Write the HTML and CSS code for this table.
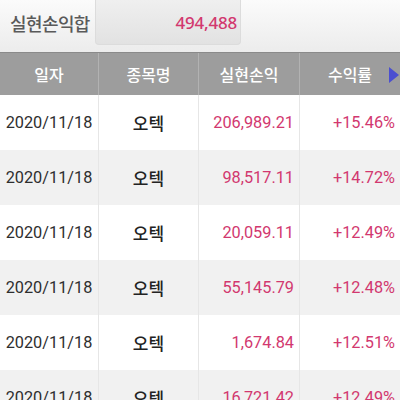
FILE: index.html
```html
<!DOCTYPE html>
<html lang="ko">
<head>
<meta charset="utf-8">
<link rel="stylesheet" href="styles.css">
</head>
<body>
<div class="summary">
  <div class="summary-label">실현손익합</div>
  <div class="summary-box"><span class="summary-value">494,488</span></div>
</div>
<div class="table">
  <div class="head">
    <div class="hcell">일자</div>
    <div class="hcell">종목명</div>
    <div class="hcell">실현손익</div>
    <div class="hcell last">수익률<span class="arrow"></span></div>
  </div>
  <div class="row">
    <div class="cell date">2020/11/18</div><div class="cell name">오텍</div><div class="cell num">206,989.21</div><div class="cell num">+15.46%</div>
  </div>
  <div class="row alt">
    <div class="cell date">2020/11/18</div><div class="cell name">오텍</div><div class="cell num">98,517.11</div><div class="cell num">+14.72%</div>
  </div>
  <div class="row">
    <div class="cell date">2020/11/18</div><div class="cell name">오텍</div><div class="cell num">20,059.11</div><div class="cell num">+12.49%</div>
  </div>
  <div class="row alt">
    <div class="cell date">2020/11/18</div><div class="cell name">오텍</div><div class="cell num">55,145.79</div><div class="cell num">+12.48%</div>
  </div>
  <div class="row">
    <div class="cell date">2020/11/18</div><div class="cell name">오텍</div><div class="cell num">1,674.84</div><div class="cell num">+12.51%</div>
  </div>
  <div class="row alt">
    <div class="cell date">2020/11/18</div><div class="cell name">오텍</div><div class="cell num">16,721.42</div><div class="cell num">+12.49%</div>
  </div>
</div>
</body>
</html>
```
FILE: styles.css
```css
html, body {
  margin: 0;
  padding: 0;
  background: #fff;
  overflow: hidden;
}
body {
  width: 400px;
  height: 400px;
  font-family: Roboto, "Noto Sans CJK KR", sans-serif;
}
.summary {
  height: 52px;
  display: flex;
  align-items: flex-start;
  background: linear-gradient(#fbfbfb, #ececec);
}
.summary-label {
  width: 95px;
  height: 45px;
  display: flex;
  align-items: center;
  padding-left: 10px;
  box-sizing: border-box;
  font-family: "Noto Sans CJK KR", sans-serif;
  font-size: 18px;
  font-weight: 500;
  color: #5a5a5a;
  letter-spacing: -0.6px;
}
.summary-box {
  width: 146px;
  height: 45px;
  box-sizing: border-box;
  display: flex;
  align-items: center;
  justify-content: flex-end;
  padding-right: 3px;
  background: linear-gradient(#efefef, #e2e2e2);
  border-radius: 0 0 4px 4px;
  border: 1px solid #dcdcdc;
  border-top: none;
}
.summary-value {
  font-family: "Noto Sans", sans-serif;
  font-size: 17px;
  font-weight: 500;
  color: #d2386f;
  letter-spacing: -0.2px;
}
.head {
  height: 43px;
  display: grid;
  grid-template-columns: 98px 100px 101px 101px;
  background: #9d9d9d;
  border-top: 1px solid #8a8a8a;
  box-sizing: border-box;
}
.hcell {
  display: flex;
  align-items: center;
  justify-content: center;
  color: #fff;
  font-family: "Noto Sans CJK KR", sans-serif;
  font-size: 16px;
  font-weight: 500;
  border-left: 1px solid #b2b2b2;
  position: relative;
}
.hcell:first-child {
  border-left: none;
}
.arrow {
  position: absolute;
  right: 1px;
  top: 14px;
  width: 0;
  height: 0;
  border-top: 8px solid transparent;
  border-bottom: 8px solid transparent;
  border-left: 10px solid #4b4fd0;
}
.row {
  height: 55px;
  display: grid;
  grid-template-columns: 98px 100px 101px 101px;
  background: #fff;
}
.row.alt {
  background: #f1f1f1;
}
.cell {
  display: flex;
  align-items: center;
  font-size: 16.3px;
  border-left: 1px solid #e6e6e6;
}
.cell:first-child {
  border-left: none;
}
.date {
  justify-content: center;
  color: #2e2e2e;
}
.name {
  justify-content: center;
  font-family: "Noto Sans CJK KR", sans-serif;
  font-weight: 500;
  color: #222;
  font-size: 17px;
}
.num {
  justify-content: flex-end;
  padding-right: 5px;
  color: #d2386f;
}
```
